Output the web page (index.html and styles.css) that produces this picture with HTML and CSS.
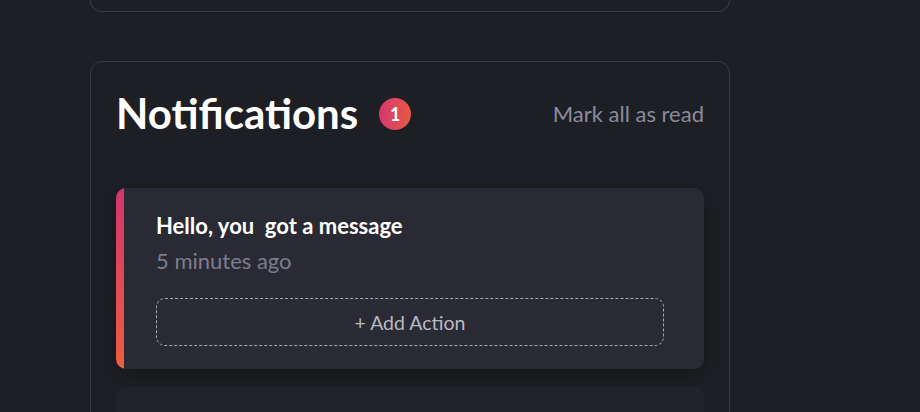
FILE: index.html
```html
<!DOCTYPE html>
<html>
<head>
<meta charset="utf-8">
<link rel="stylesheet" href="styles.css">
</head>
<body>
<div class="page">
  <div class="card card-top"></div>
  <section class="card notif">
    <header class="notif-head">
      <div class="title-wrap">
        <h1 class="title">Notifications</h1>
        <span class="badge">1</span>
      </div>
      <a class="mark-read">Mark all as read</a>
    </header>
    <div class="list">
      <article class="item">
        <div class="item-title">Hello, you&nbsp; got a message</div>
        <div class="item-time">5 minutes ago</div>
        <button class="add-action">+ Add Action</button>
      </article>
      <article class="item item-next"></article>
    </div>
  </section>
</div>
</body>
</html>
```

FILE: styles.css
```css
html, body {
  margin: 0;
  padding: 0;
  background: #1e1f24;
  height: 100%;
  overflow: hidden;
}
body {
  font-family: Lato, "Noto Sans", sans-serif;
  color: #ffffff;
}
.page {
  display: flex;
  flex-direction: column;
  gap: 49px;
  padding-left: 90px;
  width: 640px;
}
.card {
  border: 1px solid #3a3a46;
  border-radius: 12px;
  box-sizing: border-box;
}
.card-top {
  height: 12px;
  border-top: 0;
  border-radius: 0 0 12px 12px;
}
.notif {
  padding: 24px 25px 0 25px;
  height: 420px;
  overflow: hidden;
}
.notif-head {
  display: flex;
  align-items: center;
  justify-content: space-between;
  height: 54px;
}
.title-wrap {
  display: flex;
  align-items: center;
  gap: 21px;
}
.title {
  margin: 0;
  font-size: 42px;
  font-weight: 700;
  line-height: 54px;
}
.badge {
  width: 32px;
  height: 32px;
  border-radius: 50%;
  background: linear-gradient(90deg, #d4376f, #e65a45);
  display: flex;
  align-items: center;
  justify-content: center;
  font-size: 18px;
  font-weight: 700;
  margin-top: 2px;
}
.mark-read {
  font-size: 22px;
  color: #8b8b9e;
}
.list {
  display: flex;
  flex-direction: column;
  gap: 18px;
  margin-top: 48px;
}
.item {
  background: #292a33;
  border-radius: 10px;
  position: relative;
  padding: 25px 40px 23px 40px;
  box-shadow: 0 6px 22px rgba(0, 0, 0, 0.28);
  overflow: hidden;
}
.item::before {
  content: "";
  position: absolute;
  left: 0;
  top: 0;
  bottom: 0;
  width: 8px;
  background: linear-gradient(180deg, #d1356f, #ec5e3d);
}
.item-title {
  font-size: 22px;
  font-weight: 700;
  line-height: 26px;
}
.item-time {
  font-size: 22px;
  color: #7d7d90;
  line-height: 26px;
  margin-top: 9px;
}
.add-action {
  display: block;
  width: 100%;
  height: 48px;
  margin-top: 24px;
  background: transparent;
  border: 1px dashed #a9a9b6;
  border-radius: 9px;
  color: #b9b9c6;
  font-family: Lato, "Noto Sans", sans-serif;
  font-size: 19.5px;
  padding: 0;
}
.item-next {
  background: #22232a;
  height: 80px;
  box-shadow: none;
  padding: 0;
}
.item-next::before {
  display: none;
}
```
